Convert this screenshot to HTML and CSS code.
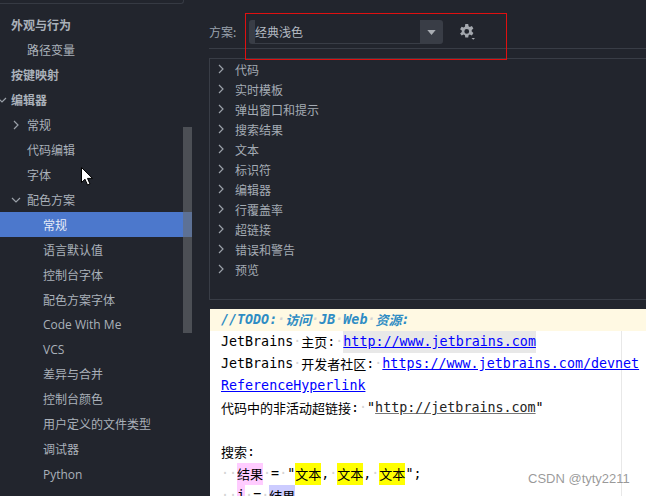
FILE: index.html
```
<!DOCTYPE html>
<html lang="zh">
<head>
<meta charset="utf-8">
<title>配色方案</title>
<link rel="stylesheet" href="styles.css">
</head>
<body>
<div class="app">
  <aside class="sidebar">
    <div class="search-edge"></div>
    <ul class="nav">
      <li class="row l0 b">外观与行为</li>
      <li class="row l1">路径变量</li>
      <li class="row l0 b">按键映射</li>
      <li class="row l0 b"><svg class="chev c0" viewBox="0 0 10 10"><path d="M1 3l4 4 4-4"/></svg>编辑器</li>
      <li class="row l1"><svg class="chev c1" viewBox="0 0 10 10"><path d="M3 1l4 4-4 4"/></svg>常规</li>
      <li class="row l1">代码编辑</li>
      <li class="row l1">字体</li>
      <li class="row l1"><svg class="chev c1" viewBox="0 0 10 10"><path d="M1 3l4 4 4-4"/></svg>配色方案</li>
      <li class="row l2 sel">常规</li>
      <li class="row l2">语言默认值</li>
      <li class="row l2">控制台字体</li>
      <li class="row l2">配色方案字体</li>
      <li class="row l2">Code With Me</li>
      <li class="row l2">VCS</li>
      <li class="row l2">差异与合并</li>
      <li class="row l2">控制台颜色</li>
      <li class="row l2">用户定义的文件类型</li>
      <li class="row l2">调试器</li>
      <li class="row l2">Python</li>
    </ul>
    <div class="scrollbar"></div>
  </aside>
  <main class="main">
    <div class="scheme">
      <span class="scheme-label">方案:</span>
      <div class="combo">
        <span class="combo-text">经典浅色</span>
        <span class="combo-btn"><svg class="tri" viewBox="0 0 10 6"><path d="M0 0h10L5 6z"/></svg></span>
      </div>
      <svg class="gear" viewBox="0 0 16 16"><path fill-rule="evenodd" d="M6.3 0h2.9l.4 2.2 1.2.7 2.1-.8 1.5 2.5-1.7 1.4v1.5l1.7 1.4-1.5 2.5-2.1-.8-1.2.7-.4 2.2H6.3l-.4-2.2-1.2-.7-2.1.8L1.1 9.5l1.7-1.4V6.6L1.100 5.200l1.5-2.500 2.100.8 1.200-.7zM7.750 5a2.400 2.400 0 1 0 0 4.800 2.400 2.400 0 0 0 0-4.800z"/><path d="M12.500 14h3.500l-1.750 1.800z"/></svg>
    </div>
    <div class="tree">
      <div class="tree-row"><svg class="tchev" viewBox="0 0 10 10"><path d="M3 1l4 4-4 4"/></svg>代码</div>
      <div class="tree-row"><svg class="tchev" viewBox="0 0 10 10"><path d="M3 1l4 4-4 4"/></svg>实时模板</div>
      <div class="tree-row"><svg class="tchev" viewBox="0 0 10 10"><path d="M3 1l4 4-4 4"/></svg>弹出窗口和提示</div>
      <div class="tree-row"><svg class="tchev" viewBox="0 0 10 10"><path d="M3 1l4 4-4 4"/></svg>搜索结果</div>
      <div class="tree-row"><svg class="tchev" viewBox="0 0 10 10"><path d="M3 1l4 4-4 4"/></svg>文本</div>
      <div class="tree-row"><svg class="tchev" viewBox="0 0 10 10"><path d="M3 1l4 4-4 4"/></svg>标识符</div>
      <div class="tree-row"><svg class="tchev" viewBox="0 0 10 10"><path d="M3 1l4 4-4 4"/></svg>编辑器</div>
      <div class="tree-row"><svg class="tchev" viewBox="0 0 10 10"><path d="M3 1l4 4-4 4"/></svg>行覆盖率</div>
      <div class="tree-row"><svg class="tchev" viewBox="0 0 10 10"><path d="M3 1l4 4-4 4"/></svg>超链接</div>
      <div class="tree-row"><svg class="tchev" viewBox="0 0 10 10"><path d="M3 1l4 4-4 4"/></svg>错误和警告</div>
      <div class="tree-row"><svg class="tchev" viewBox="0 0 10 10"><path d="M3 1l4 4-4 4"/></svg>预览</div>
    </div>
    <div class="preview">
      <div class="margin"></div>
      <div class="line todo"><i>//TODO:<span class="ws">·</span><span class="h">访问</span><span class="ws">·</span>JB<span class="ws">·</span>Web<span class="ws">·</span><span class="h">资源</span>:</i></div>
      <div class="line">JetBrains<span class="ws">·</span><span class="h">主页</span>:<span class="ws">·</span><a class="link hover">http://www.jetbrains.com</a></div>
      <div class="line">JetBrains<span class="ws">·</span><span class="h">开发者社区</span>:<span class="ws">·</span><a class="link">https://www.jetbrains.com/devnet</a></div>
      <div class="line"><a class="link">ReferenceHyperlink</a></div>
      <div class="line"><span class="h">代码中的非活动超链接</span>:<span class="ws">·</span>"<span class="inactive">http://jetbrains.com</span>"</div>
      <div class="line"></div>
      <div class="line"><span class="h">搜索</span>:</div>
      <div class="line"><span class="ws">··</span><span class="h pink">结果</span><span class="ws">·</span>=<span class="ws">·</span>"<span class="h yellow">文本</span>,<span class="ws">·</span><span class="h yellow">文本</span>,<span class="ws">·</span><span class="h yellow">文本</span>";</div>
      <div class="line"><span class="ws">··</span><span class="pink">i</span><span class="ws">·</span>=<span class="ws">·</span><span class="h lilac">结果</span></div>
    </div>
  </main>
</div>
<div class="redbox"></div>
<svg class="cursor" viewBox="0 0 12 19"><path d="M.5.5v15l3.500-3.300 2.500 5.800 2.500-1-2.500-5.600h5z"/></svg>
<div class="watermark">CSDN @tyty2211</div>
</body>
</html>
```

FILE: styles.css
```
* { box-sizing: border-box; }
html, body { margin: 0; padding: 0; }
body {
  width: 646px;
  height: 496px;
  overflow: hidden;
  position: relative;
  background: #22252d;
  font-family: "Noto Sans CJK SC", "Liberation Sans", sans-serif;
  font-size: 12px;
  color: #aab1ba;
}
.app { display: flex; height: 496px; }
.sidebar { width: 209px; flex: none; position: relative; overflow: hidden; }
.search-edge { height: 4px; width: 184px; border: 1px solid #363a43; border-top: 0; border-left: 0; border-radius: 0 0 3px 0; }
.nav { list-style: none; margin: 8px 0 0; padding: 0; width: 192px; }
.row { height: 25px; line-height: 25px; white-space: nowrap; position: relative; font-family: "Noto Sans CJK SC", "Open Sans", sans-serif; }
.nav .row:nth-child(n+13) { font-family: "Open Sans", "Noto Sans CJK SC", sans-serif; }
.l0 { padding-left: 11px; }
.l1 { padding-left: 27px; }
.l2 { padding-left: 43px; }
.b { font-weight: 700; }
.sel { background: #4c78cc; color: #e6ecf7; }
.chev { position: absolute; width: 10px; height: 10px; top: 8px; fill: none; stroke: #9aa0a8; stroke-width: 1.2; }
.c0 { left: -3px; }
.c1 { left: 11px; }
.scrollbar { position: absolute; left: 183px; top: 127px; width: 9px; height: 206px; background: rgba(105, 108, 112, .6); }
.main { flex: 1; min-width: 0; display: flex; flex-direction: column; margin-left: 0; }
.scheme { height: 49px; padding-top: 20px; margin-left: -0px; display: flex; align-items: flex-start; border-bottom: 1px solid #393d46; }
.scheme-label { width: 40px; line-height: 24px; color: #9aa3ad; }
.combo { width: 194px; height: 24px; background: #393d46; border-radius: 3px; display: flex; padding-left: 6px; }
.combo-text { width: 165px; height: 23px; background: #22252d; line-height: 23px; color: #b4bac2; }
.combo-btn { flex: 1; display: flex; align-items: center; justify-content: center; }
.tri { width: 9px; height: 5px; fill: #a9adb3; }
.gear { width: 16px; height: 16px; margin: 4px 0 0 16px; fill: #a4a8ae; }
.tree { margin-top: 9px; height: 242px; border: 1px solid #393d46; border-right: 0; padding-top: 1px; }
.tree-row { height: 20px; line-height: 20px; padding-left: 25px; position: relative; color: #a4abb4; }
.tchev { position: absolute; left: 6px; top: 4px; width: 10px; height: 10px; fill: none; stroke: #9aa0a8; stroke-width: 1.2; }
.preview { margin: 9px 0 0 1px; flex: 1; background: #fff; position: relative; padding-left: 11px; overflow: hidden; font-family: "DejaVu Sans Mono", "Noto Sans CJK SC", monospace; font-size: 13.33px; color: #000; border-top: 0; }
.margin { position: absolute; left: 411px; top: 0; bottom: 0; width: 1px; background: #e8e8e8; }
.line { height: 22px; line-height: 22px; white-space: pre; position: relative; }
.todo { background: #fff9e3; margin-left: -11px; padding-left: 11px; color: #2e8cc4; font-weight: 700; }
.h { font-family: "Noto Sans CJK SC", sans-serif; font-size: 13px; display: inline-block; height: 22px; vertical-align: top; }
.ws { color: #d4d4d4; }
.link { color: #0000ff; text-decoration: underline; }
.hover { background: #e8e8e8; display: inline-block; height: 22px; }
.inactive { text-decoration: underline; color: #222; text-decoration-color: #777; }
.pink { background: #ffccff; display: inline-block; height: 22px; }
.yellow { background: #ffff00; }
.lilac { background: #ccccff; }
.redbox { position: absolute; left: 245px; top: 13px; width: 262px; height: 47px; border: 1px solid #e01010; }
.cursor { position: absolute; left: 81px; top: 167px; width: 12px; height: 19px; fill: #fff; stroke: #000; stroke-width: 1; }
.watermark { position: absolute; left: 528px; top: 471px; font-family: "Liberation Sans", sans-serif; font-size: 13px; color: rgba(120, 120, 120, .75); white-space: nowrap; }
```
